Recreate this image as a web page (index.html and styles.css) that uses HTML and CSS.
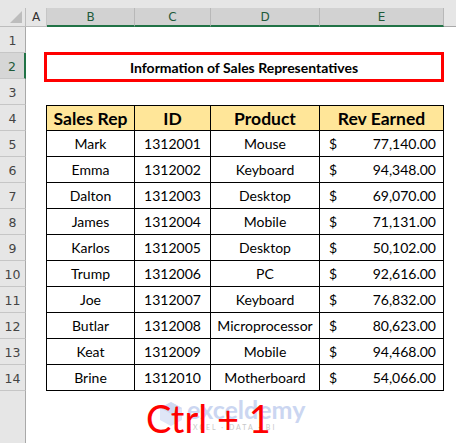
FILE: index.html
```html
<!DOCTYPE html>
<html>
<head>
<meta charset="utf-8">
<link rel="stylesheet" href="styles.css">
</head>
<body>
<div class="app">
  <div class="topstrip"></div>
  <div class="colhead">
    <div class="corner"><span class="tri"></span></div>
    <div class="ch">A</div>
    <div class="ch sel">B</div>
    <div class="ch sel">C</div>
    <div class="ch sel">D</div>
    <div class="ch sel">E</div>
    <div class="ch rest"></div>
  </div>
  <div class="row"><div class="rh">1</div></div>
  <div class="row"><div class="rh rsel">2</div><div class="merged"><div class="title">Information of Sales Representatives</div></div></div>
  <div class="row"><div class="rh">3</div></div>
  <div class="row"><div class="rh">4</div><div class="blank"></div>
    <div class="c hd first">Sales Rep</div><div class="c hd">ID</div><div class="c hd">Product</div><div class="c hd">Rev Earned</div></div>
  <div class="row"><div class="rh">5</div><div class="blank"></div>
    <div class="c first">Mark</div><div class="c">1312001</div><div class="c">Mouse</div><div class="c money"><span>$</span><span>77,140.00</span></div></div>
  <div class="row"><div class="rh">6</div><div class="blank"></div>
    <div class="c first">Emma</div><div class="c">1312002</div><div class="c">Keyboard</div><div class="c money"><span>$</span><span>94,348.00</span></div></div>
  <div class="row"><div class="rh">7</div><div class="blank"></div>
    <div class="c first">Dalton</div><div class="c">1312003</div><div class="c">Desktop</div><div class="c money"><span>$</span><span>69,070.00</span></div></div>
  <div class="row"><div class="rh">8</div><div class="blank"></div>
    <div class="c first">James</div><div class="c">1312004</div><div class="c">Mobile</div><div class="c money"><span>$</span><span>71,131.00</span></div></div>
  <div class="row"><div class="rh">9</div><div class="blank"></div>
    <div class="c first">Karlos</div><div class="c">1312005</div><div class="c">Desktop</div><div class="c money"><span>$</span><span>50,102.00</span></div></div>
  <div class="row"><div class="rh">10</div><div class="blank"></div>
    <div class="c first">Trump</div><div class="c">1312006</div><div class="c">PC</div><div class="c money"><span>$</span><span>92,616.00</span></div></div>
  <div class="row"><div class="rh">11</div><div class="blank"></div>
    <div class="c first">Joe</div><div class="c">1312007</div><div class="c">Keyboard</div><div class="c money"><span>$</span><span>76,832.00</span></div></div>
  <div class="row"><div class="rh">12</div><div class="blank"></div>
    <div class="c first">Butlar</div><div class="c">1312008</div><div class="c">Microprocessor</div><div class="c money"><span>$</span><span>80,623.00</span></div></div>
  <div class="row"><div class="rh">13</div><div class="blank"></div>
    <div class="c first">Keat</div><div class="c">1312009</div><div class="c">Mobile</div><div class="c money"><span>$</span><span>94,468.00</span></div></div>
  <div class="row"><div class="rh">14</div><div class="blank"></div>
    <div class="c first">Brine</div><div class="c">1312010</div><div class="c">Motherboard</div><div class="c money"><span>$</span><span>54,066.00</span></div></div>
  <div class="below">
    <div class="rhfill"></div>
    <div class="sheet">
      <div class="wm">
        <svg class="wmlogo" width="26" height="26" viewBox="0 0 26 26"><polygon points="13,1 24,7 24,19 13,25 2,19 2,7" fill="#dfe6f7"/><polygon points="13,1 24,7 13,13 2,7" fill="#cfdaf3"/></svg>
        <div class="wmtext"><div class="wmname">exceldemy</div><div class="wmsub">EXCEL · DATA · BI</div></div>
      </div>
      <div class="ctrl">Ctrl + 1</div>
    </div>
  </div>
</div>
</body>
</html>
```
FILE: styles.css
```css
html, body { margin: 0; padding: 0; background: #fff; overflow: hidden; }
.app { width: 456px; height: 443px; font-family: Lato, "Open Sans", sans-serif; color: #000; }
.topstrip { height: 8px; background: #e6e6e6; }
.colhead {
  display: grid;
  grid-template-columns: 26px 21px 88px 76px 109px 124px 1fr;
  height: 19px;
  background: #e6e6e6;
}
.corner { position: relative; border-right: 1px solid #bdbdbd; border-bottom: 1px solid #bdbdbd; }
.tri { position: absolute; right: 3px; bottom: 3px; width: 0; height: 0; border-left: 12px solid transparent; border-bottom: 12px solid #bdbdbd; }
.ch {
  font-family: "DejaVu Sans", sans-serif; font-size: 12px; color: #333;
  display: flex; align-items: center; justify-content: center;
  border-right: 1px solid #c6c6c6; border-bottom: 1px solid #bdbdbd;
  box-sizing: border-box;
}
.ch.sel { background: #d2d2d2; color: #1e5a3a; border-bottom: 2px solid #217346; border-right-color: #b8b8b8; }
.ch.rest { border-right: none; border-bottom: 1px solid #a9a9a9; }
.row {
  display: grid;
  grid-template-columns: 26px 21px 88px 76px 109px 124px 1fr;
  height: 26px;
}
.rh {
  background: #e6e6e6; border-right: 1px solid #a9a9a9; border-bottom: 1px solid #c6c6c6;
  box-sizing: border-box;
  font-family: "DejaVu Sans", sans-serif; font-size: 12.5px; color: #444;
  display: flex; align-items: center; justify-content: center; padding-top: 2px;
}
.rh.rsel { background: #d6d6d6; color: #1e5a3a; border-right: 2px solid #217346; }
.merged { grid-column: 3 / 7; display: flex; }
.title {
  flex: 1; margin: -1px 0 -3px -3px;
  border: 3px solid #ff0000;
  display: flex; align-items: center; justify-content: center;
  font-weight: bold; font-size: 14px;
}
.c {
  box-sizing: border-box;
  border-right: 1px solid #000; border-bottom: 1px solid #000;
  display: flex; align-items: center; justify-content: center;
  font-size: 14px;
}
.c.first { border-left: 1px solid #000; margin-left: -1px; }
.c.hd { background: #ffe699; font-weight: bold; font-size: 17.5px; border-top: 1px solid #000; }
.c.money { justify-content: space-between; padding: 0 7px 0 9px; }
.below { display: flex; height: 52px; }
.rhfill { width: 26px; box-sizing: border-box; background: #e6e6e6; border-right: 1px solid #a9a9a9; }
.sheet { flex: 1; position: relative; }
.ctrl {
  color: #ff0000; font-size: 38px; line-height: 1;
  padding: 8px 0 0 120px;
  position: relative;
}
.wm { position: absolute; left: 132px; top: 6px; display: flex; align-items: center; gap: 3px; }
.wmname { font-weight: bold; font-size: 25px; color: #cbd6f1; line-height: 1; }
.wmsub { font-size: 7px; color: #c8c8c8; letter-spacing: 2px; margin-top: 1px; }
```
